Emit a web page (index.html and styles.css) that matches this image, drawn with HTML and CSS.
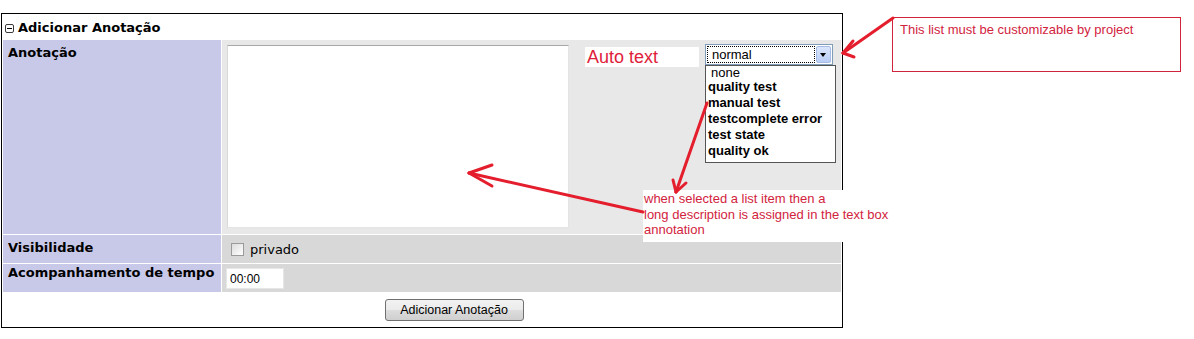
FILE: index.html
```html
<!DOCTYPE html>
<html lang="pt">

<head>
    <meta charset="UTF-8">
    <title>Adicionar Anotação</title>
    <link rel="stylesheet" href="styles.css">
</head>

<body>
    <div class="page">
        <table class="form">
            <colgroup>
                <col class="col-label">
                <col>
            </colgroup>
            <tr>
                <td class="form-title" colspan="2">
                    <svg class="toggle" width="9" height="9" viewBox="0 0 9 9">
                        <rect x="0.5" y="0.5" width="8" height="8" rx="1.5" fill="#fff" stroke="#3a3a3a" />
                        <line x1="2" y1="4.5" x2="7" y2="4.5" stroke="#000" />
                    </svg>Adicionar Anotação
                </td>
            </tr>
            <tr class="row-1">
                <td class="category">Anotação</td>
                <td class="value">
                    <div class="note-area">
                        <textarea class="note-text"></textarea>
                        <span class="auto-text">Auto text</span>
                        <div class="fake-select">
                            <span class="fake-select-value">normal</span>
                            <span class="fake-select-btn"></span>
                            <ul class="fake-select-list">
                                <li class="plain">none</li>
                                <li>quality test</li>
                                <li>manual test</li>
                                <li>testcomplete error</li>
                                <li>test state</li>
                                <li>quality ok</li>
                            </ul>
                        </div>
                    </div>
                </td>
            </tr>
            <tr class="row-2">
                <td class="category cat-vis">Visibilidade</td>
                <td class="value">
                    <label class="check"><span class="check-box"></span>privado</label>
                </td>
            </tr>
            <tr class="row-2">
                <td class="category cat-time">Acompanhamento de tempo</td>
                <td class="value value-time">
                    <input class="time-input" type="text" value="00:00">
                </td>
            </tr>
            <tr>
                <td class="actions" colspan="2">
                    <button class="btn">Adicionar Anotação</button>
                </td>
            </tr>
        </table>

        <div class="callout callout-list">This list must be customizable by project</div>
        <div class="callout callout-item">when selected a list item then a<br>long description is assigned in the text box<br>annotation</div>

        <svg class="arrows" width="1194" height="339" viewBox="0 0 1194 339">
            <g stroke="#e41e2c" stroke-width="3" stroke-linecap="round" fill="none">
                <!-- para a lista -->
                <line x1="893" y1="18" x2="843" y2="53" />
                <line x1="843" y1="53" x2="853" y2="41" />
                <line x1="843" y1="53" x2="854" y2="57" />
                <!-- para a caixa de texto -->
                <line x1="643" y1="212" x2="469" y2="173" />
                <line x1="469" y1="173" x2="492" y2="165" />
                <line x1="469" y1="173" x2="492" y2="186" />
                <!-- da lista para a nota -->
                <line x1="707" y1="103" x2="676" y2="192" />
                <line x1="676" y1="192" x2="673" y2="180" />
                <line x1="676" y1="192" x2="686" y2="183" />
            </g>
        </svg>
    </div>
</body>

</html>
```

FILE: styles.css
```css
body {
    margin: 0;
    background: #fff;
    font-family: "DejaVu Sans", Verdana, sans-serif;
    font-size: 13px;
    color: #000;
}

.page {
    position: relative;
    width: 1194px;
    height: 339px;
    padding: 13px 0 0 1px;
    box-sizing: border-box;
}

/* tabela do formulário */
.form {
    width: 842px;
    border: 1px solid #000;
    border-spacing: 1px;
    table-layout: fixed;
}

.col-label {
    width: 218px;
}

.form td {
    padding: 0;
}

.form-title {
    height: 24px;
    padding-left: 2px !important;
    font-weight: bold;
    vertical-align: middle;
}

.toggle {
    margin-right: 4px;
    vertical-align: -1px;
}

.category {
    background-color: #c8c8e8;
    font-weight: bold;
    vertical-align: top;
    line-height: 16px;
    padding: 5px 5px 0 5px !important;
}

.cat-vis {
    padding-top: 5px !important;
}

.cat-time {
    padding-top: 1px !important;
}

.row-1 .value {
    background-color: #e8e8e8;
    padding: 5px 5px 6px 5px;
    vertical-align: top;
}

.row-2 td.value {
    background-color: #d8d8d8;
    height: 28px;
    padding: 0 4px;
    vertical-align: middle;
}

.note-area {
    display: flex;
    align-items: flex-start;
}

.note-text {
    width: 342px;
    height: 183px;
    margin: 0;
    padding: 2px;
    box-sizing: border-box;
    border: 1px solid;
    border-color: #a8a8a8 #e4e4e4 #e4e4e4 #d8d8d8;
    background: #fff;
    resize: none;
}

.auto-text {
    margin: 2px 0 0 16px;
    width: 114px;
    height: 20px;
    padding-left: 2px;
    box-sizing: border-box;
    background: #fff;
    color: #e0203a;
    font-family: "Liberation Sans", Arial, sans-serif;
    font-size: 18px;
    line-height: 20px;
}

/* select aberto, desenhado à mão */
.fake-select {
    position: relative;
    display: flex;
    margin: -1px 0 0 6px;
    width: 128px;
    height: 21px;
    box-sizing: border-box;
    border: 1px solid #7f9db9;
    background: #fff;
    font-family: "Liberation Sans", Arial, sans-serif;
    font-size: 13px;
}

.fake-select-value {
    flex: 1;
    margin: 1px;
    padding-left: 4px;
    border: 1px dotted #000;
    line-height: 15px;
}

.fake-select-btn {
    position: relative;
    width: 15px;
    margin: 1px 1px 1px 0;
    border: 1px solid #a6bbe6;
    border-radius: 2px;
    background: linear-gradient(#dbe6fd, #b9cdf6);
    box-sizing: border-box;
}

.fake-select-btn::after {
    content: "";
    position: absolute;
    left: 3px;
    top: 6px;
    border-left: 3.5px solid transparent;
    border-right: 3.5px solid transparent;
    border-top: 4px solid #000;
}

.fake-select-list {
    position: absolute;
    top: 20px;
    left: -1px;
    width: 131px;
    height: 98px;
    margin: 0;
    padding: 0 0 0 2px;
    box-sizing: border-box;
    list-style: none;
    border: 1px solid #555;
    background: #fff;
    z-index: 5;
}

.fake-select-list li {
    font-weight: bold;
    line-height: 16px;
    white-space: nowrap;
}

.fake-select-list li.plain {
    font-weight: normal;
    line-height: 12px;
    padding: 1px 0 0 3px;
}

.check {
    display: flex;
    align-items: center;
    padding-left: 5px;
    padding-top: 1px;
}

.check-box {
    width: 11px;
    height: 11px;
    margin-right: 6px;
    border: 1px solid #9a9a9a;
    background: linear-gradient(135deg, #dcdcdc, #fff);
}

.value-time {
    padding-left: 4px !important;
}

.time-input {
    display: block;
    width: 58px;
    height: 21px;
    margin: 0;
    padding: 1px 3px 0;
    box-sizing: border-box;
    border: 1px solid #e6e6e6;
    background: #fff;
    font-family: "Liberation Sans", Arial, sans-serif;
    font-size: 12px;
    color: #000;
}

.actions {
    height: 33px;
    text-align: center;
    vertical-align: middle;
}

.btn {
    margin-left: 64px;
    width: 139px;
    height: 22px;
    padding: 0;
    border: 1px solid #707070;
    border-radius: 3px;
    background: linear-gradient(#f2f2f2 0%, #ebebeb 50%, #dddddd 51%, #cfcfcf 100%);
    font-family: "Liberation Sans", Arial, sans-serif;
    font-size: 12.5px;
    color: #000;
}

/* anotações em vermelho */
.callout {
    position: absolute;
    background: #fff;
    color: #d2233d;
    font-family: "Liberation Sans", Arial, sans-serif;
    font-size: 13px;
    z-index: 10;
}

.callout-list {
    left: 892px;
    top: 17px;
    width: 289px;
    height: 55px;
    padding: 4px 0 0 7px;
    box-sizing: border-box;
    border: 1px solid #d2233d;
    line-height: 15px;
}

.callout-item {
    left: 643px;
    top: 190px;
    width: 260px;
    height: 52px;
    padding: 1px 0 0 1px;
    box-sizing: border-box;
    line-height: 15.5px;
}

.arrows {
    position: absolute;
    left: 0;
    top: 0;
    pointer-events: none;
    z-index: 20;
}
```
